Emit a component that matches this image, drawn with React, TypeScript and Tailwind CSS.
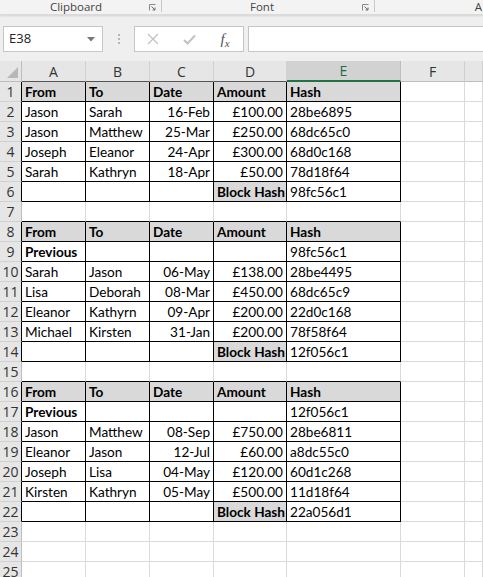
import React from "react";

type Cell = { v: string; b?: boolean; r?: boolean; g?: boolean };

const t = (v: string): Cell => ({ v });
const b = (v: string): Cell => ({ v, b: true });
const r = (v: string): Cell => ({ v, r: true });
const e: Cell = { v: "" };

const head: Cell[] = ["From", "To", "Date", "Amount", "Hash"].map((v) => ({ v, b: true, g: true }));
const blockHash = (h: string): Cell[] => [e, e, e, { v: "Block Hash", b: true, g: true }, t(h)];
const row = (a: string, to: string, d: string, amt: string, h: string): Cell[] => [t(a), t(to), r(d), r(amt), t(h)];

const rows: Record<number, Cell[]> = {
  1: head,
  2: row("Jason", "Sarah", "16-Feb", "£100.00", "28be6895"),
  3: row("Jason", "Matthew", "25-Mar", "£250.00", "68dc65c0"),
  4: row("Joseph", "Eleanor", "24-Apr", "£300.00", "68d0c168"),
  5: row("Sarah", "Kathryn", "18-Apr", "£50.00", "78d18f64"),
  6: blockHash("98fc56c1"),
  8: head,
  9: [b("Previous"), e, e, e, t("98fc56c1")],
  10: row("Sarah", "Jason", "06-May", "£138.00", "28be4495"),
  11: row("Lisa", "Deborah", "08-Mar", "£450.00", "68dc65c9"),
  12: row("Eleanor", "Kathyrn", "09-Apr", "£200.00", "22d0c168"),
  13: row("Michael", "Kirsten", "31-Jan", "£200.00", "78f58f64"),
  14: blockHash("12f056c1"),
  16: head,
  17: [b("Previous"), e, e, e, t("12f056c1")],
  18: row("Jason", "Matthew", "08-Sep", "£750.00", "28be6811"),
  19: row("Eleanor", "Jason", "12-Jul", "£60.00", "a8dc55c0"),
  20: row("Joseph", "Lisa", "04-May", "£120.00", "60d1c268"),
  21: row("Kirsten", "Kathryn", "05-May", "£500.00", "11d18f64"),
  22: blockHash("22a056d1"),
};

const inTable = (rw: number, col: number) => col >= 0 && col <= 4 && !!rows[rw];

const Launcher = () => (
  <svg width="7" height="7" viewBox="0 0 7 7" className="mt-[4px]">
    <path d="M0.5 6.5V0.5H6.5" fill="none" stroke="#8a8a8a" strokeWidth="1" />
    <path d="M2.5 2.5L6 6M6 3.5V6H3.5" fill="none" stroke="#6a6a6a" strokeWidth="1" />
  </svg>
);

const Ribbon = () => (
  <div className="h-[15px] bg-[#f3f3f3] border-b border-[#dadada] shadow-[0_1px_2px_rgba(0,0,0,0.12)] relative z-10 flex items-start text-[11.5px] leading-[14px] text-[#444] font-['Open_Sans',sans-serif] overflow-hidden">
    <div className="w-[149px] text-center pl-[3px]">Clipboard</div>
    <Launcher />
    <div className="w-[5px]" />
    <div className="w-px h-[12px] bg-[#c8c8c8]" />
    <div className="w-[200px] text-center">Font</div>
    <Launcher />
    <div className="w-[5px]" />
    <div className="w-px h-[12px] bg-[#c8c8c8]" />
    <div className="flex-1 text-right pr-[1px]">A</div>
  </div>
);

const FormulaBar = () => (
  <div className="h-[46px] bg-[#efefef] flex items-start pt-[11px] font-['Open_Sans',sans-serif]">
    <div className="ml-[3px] w-[100px] h-[26px] bg-white border border-[#c6c6c6] flex items-center justify-between pl-[5px] pr-[7px] text-[13px] text-[#222]">
      <span>E38</span>
      <svg width="8" height="5" viewBox="0 0 8 5">
        <path d="M0 0H8L4 4.5Z" fill="#777" />
      </svg>
    </div>
    <div className="w-[31px] h-[26px] flex flex-col items-center justify-center gap-[2px]">
      <div className="w-[2px] h-[2px] bg-[#b5b5b5]" />
      <div className="w-[2px] h-[2px] bg-[#b5b5b5]" />
      <div className="w-[2px] h-[2px] bg-[#b5b5b5]" />
    </div>
    <div className="w-[110px] h-[26px] bg-white border border-[#c6c6c6] flex items-center">
      <div className="w-[36px] flex justify-center">
        <svg width="12" height="12" viewBox="0 0 12 12">
          <path d="M1 1L11 11M11 1L1 11" stroke="#c2c2c2" strokeWidth="1.3" />
        </svg>
      </div>
      <div className="w-[36px] flex justify-center">
        <svg width="13" height="11" viewBox="0 0 13 11">
          <path d="M1 6L4.5 9.5L12 1.5" fill="none" stroke="#c2c2c2" strokeWidth="2" />
        </svg>
      </div>
      <div className="w-[36px] flex justify-center items-end font-['Liberation_Serif',serif] italic text-[#555] leading-none">
        <span className="text-[15px]">f</span>
        <span className="text-[11px] translate-y-[2px]">x</span>
      </div>
    </div>
    <div className="ml-[4px] flex-1 h-[26px] bg-white border border-[#c6c6c6] border-r-0" />
  </div>
);

const colHeads = ["A", "B", "C", "D", "E", "F", ""];

export default function App() {
  const rowNums = Array.from({ length: 25 }, (_, i) => i + 1);
  return (
    <div className="w-[483px] h-[577px] overflow-hidden bg-white">
      <Ribbon />
      <FormulaBar />
      <div className="grid grid-cols-[22px_64px_64px_64px_73px_114px_64px_1fr] font-['Lato',sans-serif]">
        <div className="h-[21px] bg-[#e6e6e6] border-r border-b border-[#bdbdbd] relative">
          <svg width="11" height="11" viewBox="0 0 11 11" className="absolute right-[3px] bottom-[3px]">
            <path d="M11 0V11H0Z" fill="#b8b8b8" />
          </svg>
        </div>
        {colHeads.map((h, i) => {
          const sel = i === 4;
          return (
            <div
              key={i}
              className={`h-[21px] flex items-center justify-center text-[14px] font-['Open_Sans',sans-serif] border-r ${
                sel
                  ? "bg-[#d2d2d2] text-[#1e6b3f] border-b-2 border-r-[#bdbdbd] border-b-[#217346]"
                  : i <= 3
                  ? "bg-[#e6e6e6] text-[#333] border-b border-r-[#d0d0d0] border-b-[#555]"
                  : "bg-[#e6e6e6] text-[#333] border-b border-r-[#d0d0d0] border-b-[#bdbdbd]"
              }`}
            >
              {h}
            </div>
          );
        })}
        {rowNums.map((n) => (
          <React.Fragment key={n}>
            <div
              className={`h-[20px] bg-[#e6e6e6] border-b border-b-[#d0d0d0] border-r flex items-center justify-center text-[14px] text-[#333] font-['Open_Sans',sans-serif] ${
                inTable(n, 0) ? "border-r-black" : "border-r-[#bdbdbd]"
              }`}
            >
              {n}
            </div>
            {colHeads.map((_, c) => {
              const cell = rows[n]?.[c];
              const blackR = inTable(n, c) || inTable(n, c + 1);
              const blackB = inTable(n, c) || inTable(n + 1, c);
              return (
                <div
                  key={c}
                  className={`h-[20px] border-r border-b flex items-center pt-[1px] px-[3px] text-[13.6px] text-black whitespace-nowrap overflow-visible ${
                    blackR ? "border-r-black" : "border-r-[#dadada]"
                  } ${blackB ? "border-b-black" : "border-b-[#dadada]"} ${
                    cell?.g ? "bg-[#d9d9d9]" : ""
                  } ${cell?.b ? "font-bold" : ""} ${cell?.r ? "justify-end" : ""}`}
                >
                  {cell?.v}
                </div>
              );
            })}
          </React.Fragment>
        ))}
      </div>
    </div>
  );
}
